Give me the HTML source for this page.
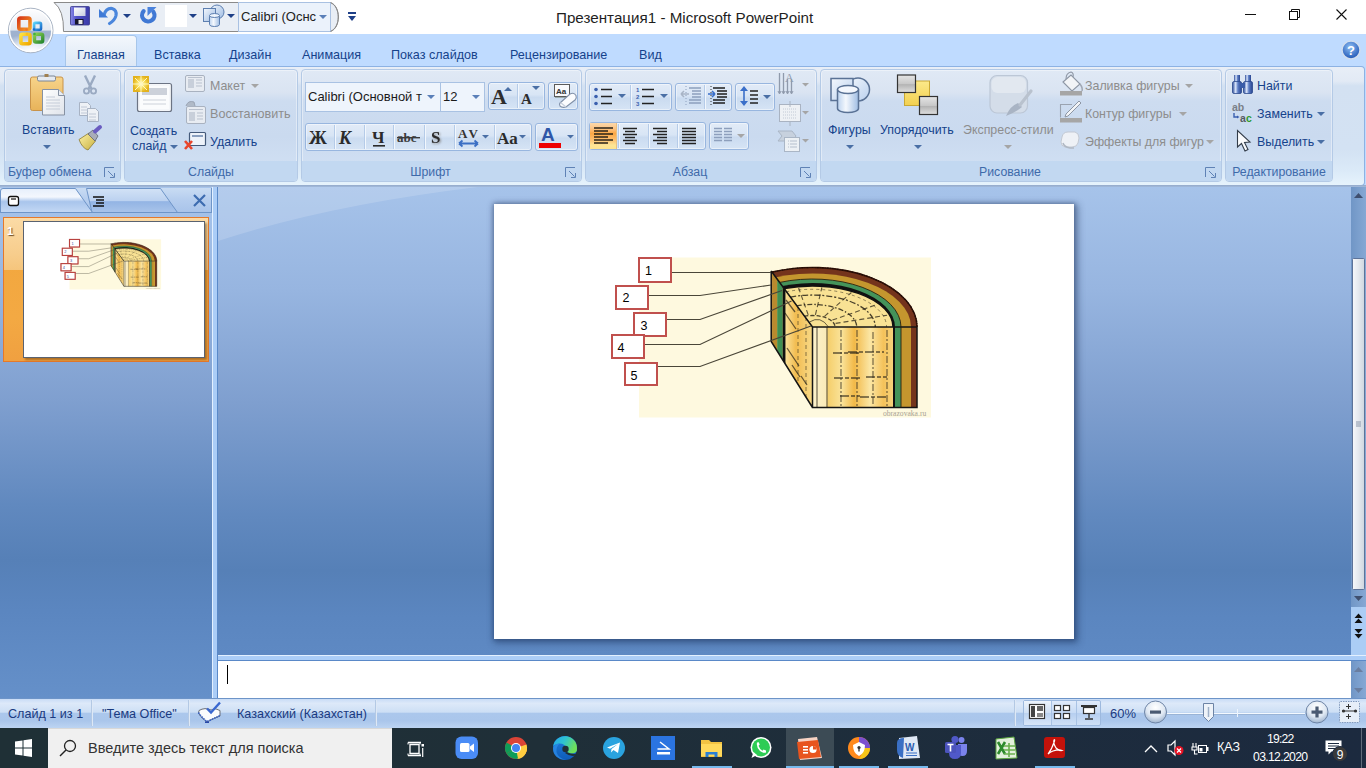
<!DOCTYPE html>
<html><head><meta charset="utf-8">
<style>
*{margin:0;padding:0;box-sizing:border-box}
html,body{width:1366px;height:768px;overflow:hidden;background:#fff;font-family:"Liberation Sans",sans-serif}
.a{position:absolute}
svg.a{overflow:visible}
.t{position:absolute;white-space:nowrap;line-height:1}
.grp{position:absolute;top:69px;height:113px;border:1px solid #b4cae6;border-radius:4px;background:linear-gradient(#e0e9f5 0,#dae4f2 20%,#cddcf0 28%,#cadaef 60%,#d3e2f5 100%);box-shadow:inset 0 0 0 1px rgba(255,255,255,.4)}
.glab{position:absolute;left:0;right:0;bottom:0;height:20px;background:#c2d8f1;border-radius:0 0 3px 3px;color:#3e6aaa;font-size:12.3px;text-align:center;line-height:23px}
.rb{font-size:12.5px;color:#15428b}
.gr{font-size:12.5px;color:#8d8d8d}
.bb{position:absolute;border:1px solid #98b6df;border-radius:3px;background:linear-gradient(#e2ebf7,#d8e5f5 45%,#cadbf0 55%,#d6e4f5);box-shadow:inset 0 0 0 1px rgba(255,255,255,.45)}
.sp{position:absolute;top:1px;bottom:1px;width:2px;background:linear-gradient(90deg,#b5cbe8 50%,#f2f7fd 50%)}
.dd{position:absolute;width:0;height:0;border-left:4px solid transparent;border-right:4px solid transparent;border-top:4px solid #4a6fa5}
.ddg{position:absolute;width:0;height:0;border-left:4px solid transparent;border-right:4px solid transparent;border-top:4px solid #a5a5a5}
</style></head><body>
<!-- TITLE -->
<div class="t" style="left:556px;top:10px;font-size:15.2px;color:#1f1f1f">Презентация1 - Microsoft PowerPoint</div>
<div class="a" style="left:1245px;top:14px;width:11px;height:1px;background:#111"></div>
<svg class="a" style="left:1289px;top:9px" width="12" height="12"><rect x="0.5" y="2.5" width="8" height="8" fill="none" stroke="#111"/><path d="M2.5 2.5V0.5H10.5V8.5H8.5" fill="none" stroke="#111"/></svg>
<svg class="a" style="left:1336px;top:9px" width="12" height="12"><path d="M0.5 0.5L10.5 10.5M10.5 0.5L0.5 10.5" stroke="#111" stroke-width="1.1"/></svg>
<!-- QAT -->
<svg class="a" style="left:0;top:0" width="370" height="34">
 <path d="M54 2.5 H330 C341 6 341 28 330 31.5 H63.5 Q64 10 54 2.5Z" fill="#e9eef5" stroke="#8a8a8a"/>
 <rect x="238.5" y="2.5" width="92" height="29" fill="#ebf2fb" stroke="#a9c1e2"/>
 <path d="M330.5 2.5 C341 6 341 28 330.5 31.5" fill="none" stroke="#8a8a8a"/>
 <!-- save -->
 <defs><linearGradient id="svg1" x1="0" y1="0" x2="1" y2="0"><stop offset="0" stop-color="#8a8ae8"/><stop offset=".3" stop-color="#5252c8"/><stop offset="1" stop-color="#3a3aa8"/></linearGradient>
 <linearGradient id="svg2" x1="0" y1="0" x2="1" y2="1"><stop offset="0" stop-color="#ffffff"/><stop offset="1" stop-color="#c8cce0"/></linearGradient></defs>
 <rect x="70.5" y="6.5" width="19" height="18.5" rx="1" fill="url(#svg1)" stroke="#3a3a8a" stroke-width="0.8"/>
 <rect x="74" y="7.5" width="11.5" height="8.5" fill="url(#svg2)"/>
 <rect x="75" y="19" width="8.5" height="5.5" fill="#15152a"/>
 <rect x="78.5" y="20" width="4" height="4" fill="#e8e8e8"/>
 <!-- undo -->
 <path d="M104 15 Q106 8 112 8.5 Q117 10 116 15.5 Q115 20 109.5 23.5" fill="none" stroke="#4a86dc" stroke-width="3.2" stroke-linecap="round"/>
 <path d="M99 9 L99 17.5 L108 17.5 Z" fill="#3f7ad6"/>
 <path d="M123 14h8l-4 4z" fill="#1e3f87"/>
 <!-- redo -->
 <path d="M143.6 11.2 A6.2 6.2 0 1 0 153.5 12" fill="none" stroke="#3f78d4" stroke-width="4.2" stroke-linecap="round"/>
 <path d="M147.5 7 L156.5 7 L147.5 16 Z" fill="#4a82dc"/>
 <rect x="165" y="5" width="22" height="22" fill="#fff"/>
 <path d="M189 14h8l-4 4z" fill="#1e3f87"/>
 <!-- shapes -->
 <defs><linearGradient id="qs" x1="0" y1="0" x2="1" y2="1"><stop offset="0" stop-color="#f4f8fd"/><stop offset="1" stop-color="#9dbbe2"/></linearGradient></defs>
 <circle cx="217" cy="12" r="7" fill="url(#qs)" stroke="#5d7fb0"/>
 <rect x="203.5" y="8.5" width="12" height="13" fill="url(#qs)" stroke="#5d7fb0"/>
 <path d="M209.5 15.5 v9 a5 2 0 0 0 10 0 v-9" fill="url(#cylq)" stroke="#5d7fb0"/>
 <ellipse cx="214.5" cy="15.5" rx="5" ry="2" fill="#eef5fd" stroke="#5d7fb0"/>
 <defs><linearGradient id="cylq" x1="0" y1="0" x2="1" y2="0"><stop offset="0" stop-color="#bcd3ef"/><stop offset=".4" stop-color="#f4f8fd"/><stop offset="1" stop-color="#9fbde3"/></linearGradient></defs>
 <path d="M227 14h8l-4 4z" fill="#1e3f87"/>
 <path d="M319 15h8l-4 4z" fill="#5a7fb8"/>
 <!-- customize -->
 <rect x="348" y="12" width="8" height="2" fill="#1e3f87"/>
 <path d="M348 16h8l-4 5z" fill="#1e3f87"/>
</svg>
<div class="t" style="left:241px;top:10px;font-size:13px;color:#222">Calibri (Оснс</div>
<!-- TABS -->
<div class="a" style="left:0;top:34px;width:1366px;height:33px;background:#bfdbff"></div>
<div class="a" style="left:65px;top:35px;width:72px;height:33px;border:1px solid #a7c6ea;border-bottom:none;border-radius:4px 4px 0 0;background:linear-gradient(#f3f7fc,#e4edf8 60%,#dce7f5)"></div>
<div class="t rb" style="left:77px;top:49px;font-size:12.6px">Главная</div>
<div class="t rb" style="left:154px;top:49px;font-size:12.6px">Вставка</div>
<div class="t rb" style="left:229px;top:49px;font-size:12.6px">Дизайн</div>
<div class="t rb" style="left:302px;top:49px;font-size:12.6px">Анимация</div>
<div class="t rb" style="left:391px;top:49px;font-size:12.6px">Показ слайдов</div>
<div class="t rb" style="left:510px;top:49px;font-size:12.6px">Рецензирование</div>
<div class="t rb" style="left:639px;top:49px;font-size:12.6px">Вид</div>
<svg class="a" style="left:1341px;top:40px" width="20" height="20">
 <defs><radialGradient id="hg" cx="45%" cy="35%" r="65%"><stop offset="0" stop-color="#8fc0f5"/><stop offset="1" stop-color="#1f55b5"/></radialGradient></defs>
 <circle cx="10" cy="10" r="9" fill="url(#hg)" stroke="#d0ddee" stroke-width="1.5"/>
 <text x="10" y="15" font-family="Liberation Sans" font-weight="bold" font-size="13" fill="#fff" text-anchor="middle">?</text>
</svg>
<!-- RIBBON BODY -->
<div class="a" style="left:0;top:66px;width:1366px;height:121px;background:#bfdbff"></div>
<div class="a" style="left:0;top:66px;width:1365px;height:120px;border:1px solid #8db2e3;border-left:none;border-radius:0 4px 4px 0;background:linear-gradient(#e8eef7 0,#e2eaf5 12%,#d3e1f2 16%,#d3e2f3 70%,#dbeaf8 88%,#e6f3fc 100%)"></div>
<div class="a" style="left:0;top:185px;width:1366px;height:2px;background:linear-gradient(#93a9ca,#a3bbdc)"></div>
<!-- groups -->
<div class="grp" style="left:4px;width:117px"><div class="glab" style="text-align:left;padding-left:3px">Буфер обмена</div></div>
<div class="grp" style="left:124px;width:174px"><div class="glab">Слайды</div></div>
<div class="grp" style="left:301px;width:281px"><div class="glab" style="padding-right:22px">Шрифт</div></div>
<div class="grp" style="left:585px;width:232px"><div class="glab" style="padding-right:22px">Абзац</div></div>
<div class="grp" style="left:820px;width:402px"><div class="glab" style="padding-right:22px">Рисование</div></div>
<div class="grp" style="left:1225px;width:108px"><div class="glab">Редактирование</div></div>
<!-- launchers -->
<svg class="a" style="left:0;top:0" width="1366" height="190">
 <g fill="none" stroke="#5f82b5">
  <path d="M104.5 177V167.5H114"/><path d="M108 171L113.5 176.5"/><path d="M110 177.5h4.5v-4.5"/>
  <path d="M565.5 177V167.5H575"/><path d="M569 171L574.5 176.5"/><path d="M571 177.5h4.5v-4.5"/>
  <path d="M800.5 177V167.5H810"/><path d="M804 171L809.5 176.5"/><path d="M806 177.5h4.5v-4.5"/>
  <path d="M1205.5 177V167.5H1215"/><path d="M1209 171L1214.5 176.5"/><path d="M1211 177.5h4.5v-4.5"/>
 </g>
</svg>
<!-- CLIPBOARD + SLIDES -->
<svg class="a" style="left:0;top:0" width="320" height="190">
 <defs>
  <linearGradient id="clipg" x1="0" y1="0" x2="0" y2="1"><stop offset="0" stop-color="#f7d48a"/><stop offset="1" stop-color="#e8b35a"/></linearGradient>
  <linearGradient id="paperg" x1="0" y1="0" x2="1" y2="1"><stop offset="0" stop-color="#ffffff"/><stop offset="1" stop-color="#dfe3ea"/></linearGradient>
  <radialGradient id="starg" cx="50%" cy="50%" r="50%"><stop offset="0" stop-color="#fffbe0"/><stop offset=".5" stop-color="#f8e060"/><stop offset="1" stop-color="#e3b21c"/></radialGradient>
 </defs>
 <!-- paste -->
 <rect x="30.5" y="77" width="32.5" height="33.5" rx="2" fill="url(#clipg)" stroke="#c8934a"/>
 <rect x="37.5" y="76" width="18" height="5" rx="1.5" fill="#e6eaf0" stroke="#7b8696"/>
 <rect x="44.5" y="74" width="4" height="3" fill="#a08050"/>
 <path d="M42.5 89.5h16l6 6v19.5h-22z" fill="url(#paperg)" stroke="#8792a3"/>
 <path d="M58.5 89.5v6h6" fill="#e9edf3" stroke="#8792a3"/>
 <path d="M46 97h9M46 100h14M46 103h14M46 106h14M46 109h14" stroke="#c5ccd8"/>
 <!-- cut (gray) -->
 <path d="M85 75.5 L91.5 89 M95 75.5 L88.5 89" stroke="#9aaac2" stroke-width="2.4"/>
 <circle cx="86.5" cy="91" r="2.6" fill="none" stroke="#9aaac2" stroke-width="1.8"/>
 <circle cx="93.5" cy="91" r="2.6" fill="none" stroke="#9aaac2" stroke-width="1.8"/>
 <!-- copy -->
 <path d="M79.5 102.5h8l3 3v10h-11z" fill="#eef1f6" stroke="#a8b3c4"/>
 <path d="M87.5 108.5h8l3 3v10h-11z" fill="#eef1f6" stroke="#a8b3c4"/>
 <path d="M81 107h6M81 110h7M81 113h7M89 114h7M89 117h7M89 120h7" stroke="#c0c8d6"/>
 <!-- format painter -->
 <defs><linearGradient id="brg" x1="0" y1="0" x2="1" y2="1"><stop offset="0" stop-color="#fdf3a8"/><stop offset="1" stop-color="#c9b040"/></linearGradient></defs>
 <path d="M79 139.5 L89 133 L95.5 141 L88 150 Q82 148 79 139.5Z" fill="url(#brg)" stroke="#8c7a30" stroke-width=".8"/>
 <path d="M88 134 L93 130 L98 136 L95 141Z" fill="#a8acb8" stroke="#5e6270" stroke-width=".8"/>
 <path d="M95 131.5 L100 127" stroke="#6a5cc0" stroke-width="4" stroke-linecap="round"/>
 <!-- new slide -->
 <rect x="137.5" y="83.5" width="34" height="28" rx="2" fill="#f4f6f9" stroke="#6c7484" stroke-width="1.2"/>
 <rect x="140" y="86" width="29" height="23" fill="#fbfcfd"/>
 <rect x="142" y="88" width="25" height="7" fill="#ccd1da"/>
 <path d="M143 100h23M143 104h23" stroke="#cdd2da"/>
 <rect x="133" y="76" width="16" height="16" fill="url(#starg)"/>
 <path d="M141 76v16M133 84h16M135 78l12 12M147 78l-12 12" stroke="#fff7c0" stroke-width="1"/>
 <!-- layout icon -->
 <rect x="185.5" y="75.5" width="19" height="16" rx="1.5" fill="#e8ecf2" stroke="#a9b2c0"/>
 <rect x="188" y="79" width="6" height="9" fill="#c8cfda"/>
 <path d="M196 80h6M196 83h6M196 86h6M188 77.5h14" stroke="#b9c1ce"/>
 <!-- reset icon -->
 <rect x="186.5" y="106.5" width="19" height="17" rx="1.5" fill="#e8ecf2" stroke="#a9b2c0"/>
 <rect x="189" y="112" width="6" height="9" fill="#c8cfda"/>
 <path d="M197 113h6M197 116h6M197 119h6M189 109.5h14" stroke="#b9c1ce"/>
 <path d="M186 106 Q188 100 194 102 L195 106" fill="#b0bac8" stroke="#9aa4b4"/>
 <!-- delete icon -->
 <rect x="189.5" y="132.5" width="16" height="13" rx="1" fill="#eef3fa" stroke="#445a7a" stroke-width="1.2"/>
 <rect x="192" y="135" width="11" height="2" fill="#8aa0c0"/>
 <path d="M185 141 L192 149 M192 141 L185 149" stroke="#e8452c" stroke-width="2.6"/>
</svg>
<div class="t rb" style="left:22px;top:124px;font-size:12.4px">Вставить</div>
<div class="dd" style="left:43px;top:145px"></div>
<div class="t rb" style="left:130px;top:125px;font-size:12.4px">Создать</div>
<div class="t rb" style="left:132px;top:140px;font-size:12.4px">слайд</div>
<div class="dd" style="left:170px;top:145px"></div>
<div class="t gr" style="left:210px;top:80px;font-size:12.4px">Макет</div>
<div class="ddg" style="left:251px;top:84px"></div>
<div class="t gr" style="left:210px;top:108px;font-size:12.6px">Восстановить</div>
<div class="t rb" style="left:210px;top:136px;font-size:12.4px">Удалить</div>
<!-- FONT GROUP -->
<div class="a" style="left:305px;top:82px;width:136px;height:30px;border:1px solid #a9c2e3;background:#eef4fc"></div>
<div class="a" style="left:440px;top:82px;width:45px;height:30px;border:1px solid #a9c2e3;background:#eef4fc"></div>
<div class="t" style="left:308px;top:90px;font-size:13px;color:#1a1a1a">Calibri (Основной т</div>
<div class="dd" style="left:427px;top:95px;border-top-color:#5a7fb8"></div>
<div class="t" style="left:443px;top:90px;font-size:13px;color:#1a1a1a">12</div>
<div class="dd" style="left:472px;top:95px;border-top-color:#5a7fb8"></div>
<div class="bb" style="left:488px;top:82px;width:57px;height:28px"><div class="sp" style="left:28px"></div></div>
<div class="bb" style="left:548px;top:82px;width:30px;height:28px"></div>
<div class="bb" style="left:305px;top:123px;width:227px;height:28px">
 <div class="sp" style="left:28px"></div><div class="sp" style="left:58px"></div><div class="sp" style="left:87px"></div><div class="sp" style="left:118px"></div><div class="sp" style="left:148px"></div><div class="sp" style="left:188px"></div>
</div>
<div class="bb" style="left:535px;top:123px;width:43px;height:28px"></div>
<svg class="a" style="left:0;top:0" width="600" height="190">
 <text x="491" y="104" font-family="Liberation Serif" font-weight="bold" font-size="22" fill="#2d2d2d">A</text>
 <path d="M504 91h8l-4-4z" fill="#4a6fa5"/>
 <text x="521" y="104" font-family="Liberation Serif" font-weight="bold" font-size="15" fill="#2d2d2d">A</text>
 <path d="M532 86h8l-4 4z" fill="#4a6fa5"/>
 <!-- clear formatting -->
 <rect x="554.5" y="84.5" width="15" height="12" fill="#f8f9fb" stroke="#5a5a5a"/>
 <path d="M555 97.5h14" stroke="#9aa" />
 <text x="556" y="94" font-family="Liberation Sans" font-weight="bold" font-size="8" fill="#333">Aa</text>
 <path d="M560 103 L570 94 Q574 92 576 95.5 Q577 98 575 100 L566 107 Q562 108 560 106 Q559 104 560 103Z" fill="#fbfcfe" stroke="#8090a8" stroke-width="1.1"/>
 <path d="M566 107 L560.5 102.5" stroke="#c6cfdc" stroke-width="1.2"/>
 <!-- B I U S ... -->
 <text x="309" y="144" font-family="Liberation Serif" font-weight="bold" font-size="18" fill="#2b2b2b">Ж</text>
 <text x="339" y="144" font-family="Liberation Serif" font-weight="bold" font-style="italic" font-size="18" fill="#2b2b2b">К</text>
 <text x="372" y="143" font-family="Liberation Serif" font-weight="bold" font-size="17" fill="#2b2b2b">Ч</text>
 <rect x="373" y="145" width="12" height="1.6" fill="#2b2b2b"/>
 <text x="397" y="142" font-family="Liberation Serif" font-weight="bold" font-size="13" fill="#3b3b3b">abc</text>
 <rect x="397" y="137" width="23" height="1.4" fill="#3b3b3b"/>
 <text x="431" y="143" font-family="Liberation Serif" font-weight="bold" font-size="17" fill="#2b2b2b" style="filter:drop-shadow(1px 1px 1px #888)">S</text>
 <text x="458" y="138" font-family="Liberation Serif" font-weight="bold" font-size="13" fill="#333" textLength="20">AV</text>
 <path d="M459 143.5h19M459 143.5l3.5-3M459 143.5l3.5 3M478 143.5l-3.5-3M478 143.5l-3.5 3" stroke="#3b6fc4" stroke-width="1.8" fill="none"/>
 <path d="M482 135h7l-3.5 3.5z" fill="#4a6fa5"/>
 <text x="497" y="144" font-family="Liberation Serif" font-weight="bold" font-size="17" fill="#2b2b2b">Aa</text>
 <path d="M519 135h7l-3.5 3.5z" fill="#4a6fa5"/>
 <text x="541" y="141" font-family="Liberation Sans" font-weight="bold" font-size="19" fill="#2f56a8">A</text>
 <rect x="539" y="143" width="22" height="5" fill="#ee0000"/>
 <path d="M567 135h7l-3.5 3.5z" fill="#4a6fa5"/>
</svg>
<!-- PARAGRAPH GROUP -->
<div class="bb" style="left:589px;top:83px;width:83px;height:28px"><div class="sp" style="left:40px"></div></div>
<div class="bb" style="left:675px;top:83px;width:57px;height:28px"><div class="sp" style="left:28px"></div></div>
<div class="bb" style="left:735px;top:83px;width:40px;height:28px"></div>
<div class="bb" style="left:589px;top:122px;width:117px;height:28px"><div class="sp" style="left:28px"></div><div class="sp" style="left:58px"></div><div class="sp" style="left:87px"></div></div>
<div class="a" style="left:590px;top:123px;width:27px;height:26px;background:linear-gradient(#fbd8aa 0,#fcc588 20%,#fba845 40%,#fcc070 65%,#fde595 85%,#fde38f 100%);border-right:1px solid #e8c080"></div>
<div class="bb" style="left:709px;top:122px;width:40px;height:28px"></div>
<svg class="a" style="left:0;top:0" width="830" height="190">
 <g fill="#3a5fae"><circle cx="596" cy="89.5" r="1.8"/><circle cx="596" cy="96.5" r="1.8"/><circle cx="596" cy="103.5" r="1.8"/></g>
 <path d="M601 89.5h11M601 96.5h11M601 103.5h11" stroke="#222" stroke-width="1.6"/>
 <path d="M618 94h8l-4 4z" fill="#4a6fa5"/>
 <text x="636" y="92" font-family="Liberation Sans" font-weight="bold" font-size="6" fill="#3a5fae">1</text>
 <text x="636" y="99" font-family="Liberation Sans" font-weight="bold" font-size="6" fill="#3a5fae">2</text>
 <text x="636" y="106" font-family="Liberation Sans" font-weight="bold" font-size="6" fill="#3a5fae">3</text>
 <path d="M642 89.5h12M642 96.5h12M642 103.5h12" stroke="#222" stroke-width="1.6"/>
 <path d="M660 94h8l-4 4z" fill="#4a6fa5"/>
 <!-- decrease indent (gray) -->
 <path d="M689 88h12M692 91h9M692 94h9M692 97h9M689 100h12M689 103h12" stroke="#8da0bd" stroke-width="1.5"/>
 <path d="M681 94h8M681 94l3-3M681 94l3 3" stroke="#a8b4c6" stroke-width="1.5"/>
 <path d="M686 86v20" stroke="#8da0bd" stroke-dasharray="1 2"/>
 <!-- increase indent -->
 <path d="M713 88h12M717 91h10M717 94h10M717 97h10M713 100h12M713 103h12" stroke="#1e1e1e" stroke-width="1.5"/>
 <path d="M708 94h7M715 94l-3-3M715 94l-3 3" stroke="#3a6fc9" stroke-width="1.6"/>
 <path d="M711 86v20" stroke="#333" stroke-dasharray="1 2"/>
 <!-- line spacing -->
 <path d="M744 90v12" stroke="#3a6fc9" stroke-width="1.6"/>
 <path d="M740 91l4-5 4 5zM740 101l4 5 4-5z" fill="#3a6fc9"/>
 <path d="M750 91h8M750 95h8M750 99h8M750 103h8" stroke="#222" stroke-width="1.6"/>
 <path d="M763 95h8l-4 4z" fill="#4a6fa5"/>
 <!-- text direction etc gray -->
 <path d="M779.5 73v20M783.5 73v20M787.5 79v14M791.5 79v14" stroke="#8f9aac" stroke-width="1.3"/>
 <path d="M778 91l1.5 3 1.5-3M782 91l1.5 3 1.5-3M786 91l1.5 3 1.5-3M790 91l1.5 3 1.5-3" fill="none" stroke="#8f9aac"/>
 <text x="785" y="82" font-family="Liberation Serif" font-size="12" fill="#8f9aac">A</text>
 <path d="M802 83h7l-3.5 3.5z" fill="#a5a5a5"/>
 <rect x="779.5" y="104.5" width="21" height="17" fill="#eef1f5" stroke="#a9b3c2"/>
 <path d="M783 109h14M783 112h14M783 115h14M783 118h14" stroke="#c2cad6" stroke-dasharray="1 1"/>
 <path d="M790 101v6M790 121v5" stroke="#a9b3c2"/>
 <path d="M802 111h7l-3.5 3.5z" fill="#a5a5a5"/>
 <path d="M778 131h14l4 5-4 5h-14l4-5z" fill="#c7d1de" stroke="#aab6c6"/>
 <rect x="784.5" y="137.5" width="15" height="14" fill="#edf1f5" stroke="#aab6c6"/>
 <path d="M788 141h9M788 144h9M788 147h9" stroke="#b5bfcd" stroke-dasharray="1 1 6 0"/>
 <path d="M802 139h7l-3.5 3.5z" fill="#a5a5a5"/>
 <!-- alignment -->
 <path d="M594 128h19M594 131h14M594 134h19M594 137h14M594 140h19M594 143h14" stroke="#2a2418" stroke-width="1.6"/>
 <path d="M623 128.5h14M625 131.5h10M623 134.5h14M625 137.5h10M623 140.5h14M625 143.5h10" stroke="#222" stroke-width="1.5"/>
 <path d="M653 128.5h14M657 131.5h10M653 134.5h14M657 137.5h10M653 140.5h14M657 143.5h10" stroke="#222" stroke-width="1.5"/>
 <path d="M682 128.5h14M682 131.5h14M682 134.5h14M682 137.5h14M682 140.5h14M682 143.5h14" stroke="#222" stroke-width="1.5"/>
 <!-- columns -->
 <path d="M714 128.5h8M724 128.5h8M714 131.5h8M724 131.5h8M714 134.5h8M724 134.5h8M714 137.5h8M724 137.5h8M714 140.5h8M724 140.5h8" stroke="#8d9fbc" stroke-width="1.5"/>
 <path d="M737 134h8l-4 4z" fill="#a5a5a5"/>
</svg>
<!-- DRAWING + EDITING -->
<svg class="a" style="left:0;top:0" width="1366" height="190">
 <defs>
  <linearGradient id="cyl" x1="0" y1="0" x2="1" y2="0"><stop offset="0" stop-color="#bcd3ef"/><stop offset=".4" stop-color="#f4f8fd"/><stop offset="1" stop-color="#9fbde3"/></linearGradient>
  <linearGradient id="sq1" x1="0" y1="0" x2="0" y2="1"><stop offset="0" stop-color="#f0f0f0"/><stop offset="1" stop-color="#b8b8b8"/></linearGradient>
  <linearGradient id="sqy" x1="0" y1="0" x2="0" y2="1"><stop offset="0" stop-color="#fdf1a0"/><stop offset="1" stop-color="#f1cf3c"/></linearGradient>
 </defs>
 <!-- shapes -->
 <defs><linearGradient id="shp" x1="0" y1="0" x2="1" y2="1"><stop offset="0" stop-color="#f4f8fd"/><stop offset="1" stop-color="#b9d0ee"/></linearGradient></defs>
 <circle cx="858" cy="89.5" r="11.5" fill="url(#shp)" stroke="#5a7295" stroke-width="1.5"/>
 <rect x="831" y="78.5" width="22" height="22" fill="url(#shp)" stroke="#5a7295" stroke-width="1.5"/>
 <path d="M837.5 89.5 v19 a10.5 4 0 0 0 21 0 v-19" fill="url(#cyl)" stroke="#5a7295" stroke-width="1.5"/>
 <ellipse cx="848" cy="89.5" rx="10.5" ry="4" fill="#f3f7fd" stroke="#5a7295" stroke-width="1.5"/>
 <!-- arrange -->
 <defs><linearGradient id="sqg" x1="0" y1="0" x2="0" y2="1"><stop offset="0" stop-color="#e6e6e6"/><stop offset=".5" stop-color="#c8c8c8"/><stop offset=".55" stop-color="#b4b4b4"/><stop offset="1" stop-color="#e0e0e0"/></linearGradient>
 <linearGradient id="sqy2" x1="0" y1="0" x2="0" y2="1"><stop offset="0" stop-color="#fce98a"/><stop offset="1" stop-color="#f2d050"/></linearGradient></defs>
 <rect x="904.5" y="81" width="25" height="24.5" fill="url(#sqy2)" stroke="#c9a834"/>
 <rect x="897.5" y="75" width="18" height="17.5" fill="url(#sqg)" stroke="#333" stroke-width="1.2"/>
 <rect x="919.5" y="96.5" width="18" height="18" fill="url(#sqg)" stroke="#333" stroke-width="1.2"/>
 <!-- quick styles gray -->
 <rect x="990" y="75.5" width="37.5" height="37.5" rx="7" fill="#d4dde9" stroke="#bcc7d6" stroke-width="1.2"/>
 <rect x="991.5" y="77" width="34.5" height="16" rx="6" fill="#e2e8f0"/>
 <path d="M1006 116 Q1010 106 1018 103 L1022 107 Q1016 112 1006 116Z" fill="#a9b4c4"/>
 <path d="M1020 105 L1031 91" stroke="#b9c2ce" stroke-width="3.2" stroke-linecap="round"/>
 <!-- fill icon -->
 <path d="M1063 82 L1071 75 L1080 84 L1072 91 Z" fill="#f2f4f7" stroke="#8d96a4" stroke-width="1.1"/>
 <path d="M1066 79 Q1066 73 1071 72 Q1074 73 1073 77" fill="none" stroke="#8d96a4" stroke-width="1.1"/>
 <path d="M1080 84 Q1083 88 1082 91" fill="none" stroke="#a0a8b4" stroke-width="1.5"/>
 <rect x="1060" y="91" width="22" height="4.5" fill="#a6a6a6"/>
 <!-- outline icon -->
 <path d="M1060.5 117.5 V104.5 H1072" fill="none" stroke="#9aa3b0" stroke-width="1.1"/>
 <path d="M1066 114 L1079 101 L1081 103 L1068 116 L1065 117Z" fill="#f2f4f7" stroke="#8d96a4"/>
 <rect x="1060" y="118" width="22" height="4.5" fill="#a6a6a6"/>
 <!-- effects icon -->
 <path d="M1062 137 Q1063 132 1068 132 L1075 132 Q1079 133 1079 138 L1078 143 Q1077 147 1072 147 L1065 147 Q1061 146 1061 142Z" fill="#eef1f6" stroke="#c3c9d3"/>
 <path d="M1063 143 Q1064 147 1070 148 L1074 148" fill="none" stroke="#b0b8c4" stroke-width="1.5"/>
 <!-- find -->
 <defs><linearGradient id="bino" x1="0" y1="0" x2="1" y2="0"><stop offset="0" stop-color="#2d4d9a"/><stop offset=".35" stop-color="#dbe6fb"/><stop offset=".6" stop-color="#5b7cc4"/><stop offset="1" stop-color="#2a4690"/></linearGradient></defs>
 <rect x="1234" y="75" width="6" height="7" fill="url(#bino)"/><rect x="1245" y="75" width="6" height="7" fill="url(#bino)"/>
 <rect x="1232.5" y="81.5" width="9" height="12" rx="1.5" fill="url(#bino)" stroke="#2c4a8e" stroke-width=".8"/>
 <rect x="1243.5" y="81.5" width="9" height="12" rx="1.5" fill="url(#bino)" stroke="#2c4a8e" stroke-width=".8"/>
 <rect x="1240" y="83" width="5" height="5" fill="#3a5ca8"/>
 <!-- replace -->
 <text x="1232" y="111" font-family="Liberation Sans" font-weight="bold" font-size="10.5" fill="#7a7f88">ab</text>
 <text x="1240" y="122" font-family="Liberation Sans" font-weight="bold" font-size="10.5" fill="#555a62">a</text>
 <text x="1246" y="122" font-family="Liberation Sans" font-weight="bold" font-size="10.5" fill="#2f9a2f">c</text>
 <path d="M1234 113 v4 h4" fill="none" stroke="#3a5fae" stroke-width="1.4"/><path d="M1237 115.5 l2.5 1.5 -2.5 1.5z" fill="#3a5fae"/>
 <!-- select -->
 <path d="M1237.5 130.5 L1237.5 147 L1241.5 143.5 L1245 151 L1248 149.5 L1244.5 142.5 L1250 142 Z" fill="#fafbfd" stroke="#333d4a" stroke-width="1.1"/>
</svg>
<div class="t rb" style="left:828px;top:124px;font-size:12.4px">Фигуры</div>
<div class="dd" style="left:846px;top:145px"></div>
<div class="t rb" style="left:880px;top:124px;font-size:12.4px">Упорядочить</div>
<div class="dd" style="left:914px;top:145px"></div>
<div class="t gr" style="left:963px;top:124px;font-size:12.4px">Экспресс-стили</div>
<div class="ddg" style="left:1004px;top:145px"></div>
<div class="t gr" style="left:1085px;top:80px;font-size:12.4px">Заливка фигуры</div>
<div class="ddg" style="left:1185px;top:84px"></div>
<div class="t gr" style="left:1085px;top:108px;font-size:12.4px">Контур фигуры</div>
<div class="ddg" style="left:1179px;top:112px"></div>
<div class="t gr" style="left:1085px;top:136px;font-size:12.4px">Эффекты для фигур</div>
<div class="ddg" style="left:1206px;top:140px"></div>
<div class="t rb" style="left:1257px;top:80px;font-size:12.4px">Найти</div>
<div class="t rb" style="left:1257px;top:108px;font-size:12.4px">Заменить</div>
<div class="dd" style="left:1317px;top:112px"></div>
<div class="t rb" style="left:1257px;top:136px;font-size:12.4px">Выделить</div>
<div class="dd" style="left:1317px;top:140px"></div>
<!-- MAIN AREA -->
<div class="a" style="left:0;top:187px;width:1366px;height:511px;background:#a5c3ea"></div>
<!-- left pane -->
<div class="a" style="left:0;top:187px;width:212px;height:511px;background:linear-gradient(#a8c5eb 0,#97b5e0 20%,#7f9fcf 42%,#6189bf 62%,#5680b7 73%,#5b86c0 83%,#6590c9 100%)"></div>
<!-- pane tabs strip -->
<div class="a" style="left:0;top:188px;width:212px;height:25px;background:linear-gradient(#c9dcf3,#b5cdee 50%,#a9c4ea);border-bottom:1px solid #6e95c8;border-right:1px solid #6e95c8"></div>
<svg class="a" style="left:0;top:187px" width="212" height="27">
 <defs>
  <linearGradient id="pt1" x1="0" y1="0" x2="0" y2="1"><stop offset="0" stop-color="#e6effb"/><stop offset=".35" stop-color="#f3f7fd"/><stop offset=".55" stop-color="#a9c5ec"/><stop offset="1" stop-color="#c3d8f4"/></linearGradient>
  <linearGradient id="pt2" x1="0" y1="0" x2="0" y2="1"><stop offset="0" stop-color="#d2e2f6"/><stop offset=".5" stop-color="#bcd2f0"/><stop offset=".55" stop-color="#93b4e4"/><stop offset="1" stop-color="#a9c4ea"/></linearGradient>
 </defs>
 <path d="M86.5 1.5 H160.5 L177.5 25.5 H92 Z" fill="url(#pt2)" stroke="#6e95c8"/>
 <path d="M0.5 25.5 V4 Q0.5 1.5 3 1.5 H75.5 L92.5 25.5 Z" fill="url(#pt1)" stroke="#6e95c8"/>
 <rect x="8.5" y="9.5" width="10" height="9" rx="2" fill="#fff" stroke="#111" stroke-width="1.3"/>
 <path d="M11 12h5" stroke="#111" stroke-width="1.2"/>
 <path d="M93 10h11M96 13h8M96 16h8M93 19h11" stroke="#111" stroke-width="1.3"/>
 <path d="M194 8 L205 19 M205 8 L194 19" stroke="#3d6cb0" stroke-width="2.2"/>
</svg>
<!-- thumbnail selection -->
<div class="a" style="left:3px;top:217px;width:206px;height:145px;border:1px solid #e5792a;background:linear-gradient(#fbdba6 0,#f7cd8c 70%,#f5c57c 100%) 0 0/100% 52px no-repeat,linear-gradient(#f2a63c,#f3a943 70%,#f0a040)"></div>
<div class="t" style="left:7px;top:226px;font-size:11.5px;font-weight:bold;color:#fff;text-shadow:1px 1px 1px rgba(60,30,0,.75)">1</div>
<div class="a" style="left:23px;top:221px;width:182px;height:137px;background:#fff;border:1px solid #5a6270;box-shadow:2px 2px 2px rgba(90,50,0,.45)"></div>
<!-- splitter -->
<div class="a" style="left:212px;top:187px;width:6px;height:511px;background:#abcdf7;border-left:1px solid #e3f0ff;border-right:1px solid #5a89c8"></div>
<!-- slide area -->
<div class="a" style="left:218px;top:187px;width:1133px;height:468px;background:linear-gradient(#a6c3ea 0,#97b5e0 22%,#7f9fcf 46%,#6189bf 70%,#5680b7 82%,#5b86c0 92%,#5e89c3 100%)"></div>
<svg class="a" style="left:218px;top:187px" width="1133" height="200">
 <path d="M0 54 Q110 18 260 0 L0 0Z" fill="rgba(255,255,255,.16)"/>
</svg>
<!-- slide -->
<div class="a" style="left:494px;top:204px;width:580px;height:435px;background:#fff;box-shadow:0 0 4px 1px rgba(20,40,80,.3),2px 2px 7px 2px rgba(20,40,80,.42)"></div>
<!-- vertical scrollbar -->
<div class="a" style="left:1351px;top:187px;width:15px;height:420px;background:linear-gradient(90deg,#7096c6,#86a8d4)"></div>
<svg class="a" style="left:1351px;top:187px" width="15" height="470">
 <path d="M3 11h9l-4.5-5z" fill="#3f4f6f"/>
 <rect x="1.5" y="71.5" width="12" height="331" rx="1" fill="url(#thb)" stroke="#5d7399"/>
 <defs><linearGradient id="thb" x1="0" y1="0" x2="1" y2="0"><stop offset="0" stop-color="#f6f8fb"/><stop offset=".5" stop-color="#e4e8ee"/><stop offset="1" stop-color="#cfd6df"/></linearGradient></defs>
 <path d="M5 235h5M5 237h5M5 239h5" stroke="#8a97aa"/>
 <path d="M3 409h9l-4.5 5z" fill="#3f4f6f"/>
 <rect x="0" y="420" width="15" height="48" fill="#abcdf5"/>
 <path d="M3.5 431h8l-4-4.5zM3.5 436h8l-4-4.5z" fill="#111"/>
 <path d="M3.5 442h8l-4 4.5zM3.5 447h8l-4 4.5z" fill="#111"/>
</svg>
<!-- notes splitter -->
<div class="a" style="left:218px;top:655px;width:1148px;height:6px;background:#abcdf7;border-top:1px solid #e3f0ff;border-bottom:1px solid #5a89c8"></div>
<div class="a" style="left:218px;top:661px;width:1133px;height:37px;background:#fff"></div>
<div class="a" style="left:227px;top:665px;width:1px;height:19px;background:#000"></div>
<div class="a" style="left:1351px;top:661px;width:15px;height:37px;background:linear-gradient(90deg,#7096c6,#86a8d4)"></div>
<svg class="a" style="left:1351px;top:661px" width="15" height="37">
 <path d="M3 11h9l-4.5-5z" fill="#6a7ea0"/><path d="M3 27h9l-4.5 5z" fill="#6a7ea0"/>
</svg>
<svg class="a" style="left:0;top:0;pointer-events:none" width="1366" height="768">
<defs>
<linearGradient id="wood" x1="0" y1="0" x2="1" y2="0"><stop offset="0" stop-color="#fcf2cc"/><stop offset=".13" stop-color="#faeab8"/><stop offset=".15" stop-color="#f5cf6c"/><stop offset=".28" stop-color="#fae39a"/><stop offset=".4" stop-color="#f2b948"/><stop offset=".55" stop-color="#fbe6a4"/><stop offset=".68" stop-color="#f4c25a"/><stop offset=".85" stop-color="#fae29a"/><stop offset="1" stop-color="#f3c460"/></linearGradient>
<linearGradient id="lwood" x1="0" y1="0" x2="1" y2="0"><stop offset="0" stop-color="#f4c860"/><stop offset=".35" stop-color="#fae098"/><stop offset=".6" stop-color="#f2bc50"/><stop offset="1" stop-color="#f8da88"/></linearGradient>
<g id="slidec">
<rect x="639" y="257.5" width="292" height="160" fill="#fef9df"/>
<path d="M771.2 271L812.5 327.0L812.5 407.5L771.2 341.5Z" fill="url(#lwood)"/>
<path d="M771.2 271.0L772.4 272.6L772.4 343.4L771.2 341.5Z" fill="#6a3a1a"/>
<path d="M772.4 272.6L777.2 279.1L777.2 351.1L772.4 343.4Z" fill="#b98a2e"/>
<path d="M777.2 279.1L782.7 286.6L782.7 359.9L777.2 351.1Z" fill="#3f8f52"/>
<path d="M782.7 286.6L784.7 289.3L784.7 363.1L782.7 359.9Z" fill="#111"/>
<rect x="812.5" y="327.0" width="104.5" height="80.5" fill="url(#wood)"/>
<rect x="911.0" y="327.0" width="6.0" height="80.5" fill="#74341c"/>
<rect x="901.0" y="327.0" width="10.0" height="80.5" fill="#c4962e"/>
<rect x="895.0" y="327.0" width="6.0" height="80.5" fill="#44935a"/>
<rect x="893.0" y="327.0" width="2.0" height="80.5" fill="#111111"/>
<path d="M812.5 327.0L772.04 272.14A104.5 59.5 0 0 1 917.00 327.0Z" fill="#74341c"/>
<path d="M812.5 327.0L775.87 277.34A98.5 53.5 0 0 1 911.00 327.0Z" fill="#c4962e"/>
<path d="M812.5 327.0L779.63 282.43A88.5 48 0 0 1 901.00 327.0Z" fill="#44935a"/>
<path d="M812.5 327.0L782.30 286.05A82.5 44 0 0 1 895.00 327.0Z" fill="#111111"/>
<path d="M812.5 327.0L784.19 288.62A80.5 41 0 0 1 893.00 327.0Z" fill="#f9e294"/>
<path d="M804.57 316.25A22.540000000000003 11.48 0 0 1 835.04 327.0" fill="none" stroke="#2a2418" stroke-width="1.3" stroke-dasharray="4 2" opacity=".85"/>
<path d="M796.93 305.89A44.275000000000006 22.55 0 0 1 856.77 327.0" fill="none" stroke="#2a2418" stroke-width="1.3" stroke-dasharray="5 2 1.5 2" opacity=".85"/>
<path d="M790.42 297.06A62.79 31.98 0 0 1 875.29 327.0" fill="none" stroke="#2a2418" stroke-width="1.3" stroke-dasharray="6 2 2 2" opacity=".85"/>
<path d="M786.46 291.69A74.06 37.72 0 0 1 886.56 327.0" fill="none" stroke="#2a2418" stroke-width="1" stroke-dasharray="3 3" opacity=".5"/>
<path d="M808.2 314.9L798.6 287.9" stroke="#2a2418" stroke-width="1.1" stroke-dasharray="5 3" opacity=".75"/>
<path d="M815.4 314.8L821.9 287.5" stroke="#2a2418" stroke-width="1.1" stroke-dasharray="5 3" opacity=".75"/>
<path d="M824.5 316.3L851.4 292.5" stroke="#2a2418" stroke-width="1.1" stroke-dasharray="5 3" opacity=".75"/>
<path d="M832.4 320.1L876.9 304.5" stroke="#2a2418" stroke-width="1.1" stroke-dasharray="5 3" opacity=".75"/>
<path d="M835.6 323.4L887.1 315.2" stroke="#2a2418" stroke-width="1.1" stroke-dasharray="5 3" opacity=".75"/>
<clipPath id="lfc"><path d="M771.2 271L812.5 327.0L812.5 407.5L771.2 341.5Z"/></clipPath>
<g fill="none" stroke="#2a2418" clip-path="url(#lfc)">
<path d="M786 300l9 12M785 313l11 16M787 348l12 18M792 365l8 12M801 376l6 9" stroke-width="1.3" opacity=".7"/>
<path d="M798 300v95M806 310v90" stroke-width="1" stroke-dasharray="4 3" opacity=".55"/>
</g>
<g fill="none" stroke="#2a2418">
<path d="M827 327.0V407.5M817 327.0V407.5" stroke-width="1" opacity=".8"/>
<path d="M841 330v76M857 330v76M873 332v74M887 330v76" stroke-width="1.1" stroke-dasharray="7 2 2 2" opacity=".7"/>
<path d="M833 353h27M848 352h36M834 378h26M866 377h21M840 396h20M860 397h27" stroke-width="1.6" stroke-dasharray="9 2 4 2" opacity=".75"/>
</g>
<path d="M809.5 322.0 Q820.5 315.0 828.5 327.0" fill="none" stroke="#2a2418" stroke-width="1" opacity=".7"/>
<path d="M771.2 271L812.5 327.0H917.0M812.5 327.0V407.5H917.0V327.0M771.2 271V341.5L812.5 407.5" fill="none" stroke="#141414" stroke-width="1.5"/>
<path d="M772.04 272.14A104.5 59.5 0 0 1 917.00 327.0" fill="none" stroke="#3a140a" stroke-width="1.6"/>
<path d="M784.19 288.62A80.5 41 0 0 1 893.00 327.0" fill="none" stroke="#111" stroke-width="1.4"/>
<path d="M779.63 282.43A88.5 48 0 0 1 901.00 327.0" fill="none" stroke="#2a2010" stroke-width=".9"/>
<path d="M901.0 327.0V407.5" stroke="#2a2010" stroke-width=".9"/>
<path d="M772.04 272.14A104.5 59.5 0 0 1 917.00 327.0" fill="none" stroke="#1a0a04" stroke-width="1.2" stroke-dasharray="2 1 1 1"/>
<path d="M784.7 289.3V363.1" stroke="#111" stroke-width="1.5"/>
<g fill="none" stroke="#4a4638" stroke-width="1.15">
<path d="M672 272.5H771"/>
<path d="M649 295.5L700 295.5L771 285"/>
<path d="M667 319.5L700 319.5L782 290.5"/>
<path d="M645 344.5L700 344.5L791.5 301"/>
<path d="M657 366.5L700 366.5L811 326"/>
</g>
<rect x="639" y="258" width="32" height="24" fill="#fff" stroke="#c0504d" stroke-width="2"/>
<text x="645" y="275" font-family="Liberation Sans" font-size="12.5" fill="#000">1</text>
<rect x="616" y="286" width="32" height="23" fill="#fff" stroke="#c0504d" stroke-width="2"/>
<text x="622.5" y="301.8" font-family="Liberation Sans" font-size="12.5" fill="#000">2</text>
<rect x="634" y="313" width="32" height="23" fill="#fff" stroke="#c0504d" stroke-width="2"/>
<text x="640.5" y="329.6" font-family="Liberation Sans" font-size="12.5" fill="#000">3</text>
<rect x="612" y="335" width="32" height="23" fill="#fff" stroke="#c0504d" stroke-width="2"/>
<text x="617.5" y="351.8" font-family="Liberation Sans" font-size="12.5" fill="#000">4</text>
<rect x="625" y="363" width="32" height="22" fill="#fff" stroke="#c0504d" stroke-width="2"/>
<text x="630.5" y="379.6" font-family="Liberation Sans" font-size="12.5" fill="#000">5</text>
<text x="883" y="415.5" font-family="Liberation Serif" font-size="7.6" fill="#a8a294">obrazovaka.ru</text>
</g>
<g id="thumbboxes">
<rect x="639" y="258" width="32" height="24" fill="#fff" stroke="#b8423f" stroke-width="3.6"/>
<text x="645" y="275" font-family="Liberation Sans" font-size="12.5" fill="#3a50a0">1</text>
<rect x="616" y="286" width="32" height="23" fill="#fff" stroke="#b8423f" stroke-width="3.6"/>
<text x="622.5" y="301.8" font-family="Liberation Sans" font-size="12.5" fill="#3a50a0">2</text>
<rect x="634" y="313" width="32" height="23" fill="#fff" stroke="#b8423f" stroke-width="3.6"/>
<text x="640.5" y="329.6" font-family="Liberation Sans" font-size="12.5" fill="#3a50a0">3</text>
<rect x="612" y="335" width="32" height="23" fill="#fff" stroke="#b8423f" stroke-width="3.6"/>
<text x="617.5" y="351.8" font-family="Liberation Sans" font-size="12.5" fill="#3a50a0">4</text>
<rect x="625" y="363" width="32" height="22" fill="#fff" stroke="#b8423f" stroke-width="3.6"/>
<text x="630.5" y="379.6" font-family="Liberation Sans" font-size="12.5" fill="#3a50a0">5</text>
</g>
</defs>
<use href="#slidec"/>
<use href="#slidec" transform="translate(24,222.5) scale(0.31379) translate(-494,-204)"/>
<use href="#thumbboxes" transform="translate(24,222.5) scale(0.31379) translate(-494,-204)"/>
</svg><!-- STATUS BAR -->
<div class="a" style="left:0;top:698px;width:1366px;height:30px;background:linear-gradient(#c9dcf6 0,#dde9f9 15%,#cddff5 45%,#abc7ec 50%,#aac6eb 75%,#bcd4f2 100%);border-top:1px solid #6d94c8"></div>
<div class="a" style="left:91px;top:700px;width:2px;height:26px;background:linear-gradient(90deg,#9eb9dc,#f3f8fe)"></div>
<div class="a" style="left:188px;top:700px;width:2px;height:26px;background:linear-gradient(90deg,#9eb9dc,#f3f8fe)"></div>
<div class="a" style="left:375px;top:700px;width:2px;height:26px;background:linear-gradient(90deg,#9eb9dc,#f3f8fe)"></div>
<div class="a" style="left:1014px;top:700px;width:2px;height:26px;background:linear-gradient(90deg,#9eb9dc,#f3f8fe)"></div>
<div class="t" style="left:8px;top:708px;font-size:12.6px;color:#1a3a80">Слайд 1 из 1</div>
<div class="t" style="left:102px;top:708px;font-size:12.6px;color:#1a3a80">"Тема Office"</div>
<div class="t" style="left:237px;top:708px;font-size:12.6px;color:#1a3a80">Казахский (Казахстан)</div>
<svg class="a" style="left:192px;top:700px" width="36" height="28">
 <path d="M7 10.5 Q13 7 19 10 Q24 7.5 28 10.5 L28 16 Q22 18 15 22 Q9 18 6.5 13Z" fill="#fbfcfd" stroke="#6a6f78" stroke-width="1"/>
 <path d="M6.5 12.5 Q10 18 15 21.5 Q22 18.5 28 15.5" fill="none" stroke="#3460c8" stroke-width="1.6" stroke-dasharray="1.5 1"/>
 <path d="M13 21.5h4v1.5h-4z" fill="#2848a8"/>
 <path d="M15 8.5 L19 12.5 L28 2.5" fill="none" stroke="#3a68d0" stroke-width="2.4"/>
</svg>
<div class="a" style="left:1023px;top:700px;width:78px;height:26px;border:1px solid #9db9de;border-radius:2px;background:linear-gradient(#dfeafa,#c7dbf5 50%,#b6cff0 51%,#cfe0f6)"></div>
<div class="a" style="left:1024px;top:701px;width:28px;height:24px;background:linear-gradient(#edf4fc,#cfe0f5 50%,#bcd3f1 51%,#d8e6f8);border-right:1px solid #a8c2e4"></div>
<div class="a" style="left:1076px;top:701px;width:1px;height:24px;background:#a8c2e4"></div>
<svg class="a" style="left:0;top:698px" width="1366" height="30">
 <rect x="1029.5" y="6.5" width="15" height="14" fill="#fff" stroke="#333" stroke-width="1.2"/>
 <rect x="1031" y="8" width="4" height="11" fill="#444"/>
 <rect x="1037" y="8" width="6" height="5" fill="#666"/><rect x="1037" y="15" width="6" height="4" fill="#888"/>
 <rect x="1054.5" y="7.5" width="6" height="5" fill="#fff" stroke="#333" stroke-width="1.2"/><rect x="1063.5" y="7.5" width="6" height="5" fill="#fff" stroke="#333" stroke-width="1.2"/>
 <rect x="1054.5" y="15.5" width="6" height="5" fill="#fff" stroke="#333" stroke-width="1.2"/><rect x="1063.5" y="15.5" width="6" height="5" fill="#fff" stroke="#333" stroke-width="1.2"/>
 <rect x="1081" y="7" width="16" height="2" fill="#333"/>
 <rect x="1083.5" y="9.5" width="11" height="6" fill="#fff" stroke="#333" stroke-width="1.2"/>
 <path d="M1089 16v4M1085 21h8" stroke="#333" stroke-width="1.4"/>
 <defs><radialGradient id="zb" cx="50%" cy="30%" r="70%"><stop offset="0" stop-color="#ffffff"/><stop offset=".6" stop-color="#dfe8f3"/><stop offset="1" stop-color="#9fb4cf"/></radialGradient></defs>
 <path d="M1167 15.5h138" stroke="#f4f9ff" stroke-width="1"/><path d="M1167 16.5h138" stroke="#8fa8c8" stroke-width=".6"/>
 <path d="M1237.5 11v8" stroke="#eef5fd" stroke-width="1"/>
 <circle cx="1155.5" cy="14" r="11" fill="url(#zb)" stroke="#6d84a6"/>
 <rect x="1150" y="12.5" width="11" height="3.2" fill="#4a5a72"/>
 <circle cx="1317" cy="14" r="11" fill="url(#zb)" stroke="#6d84a6"/>
 <rect x="1311.5" y="12.5" width="11" height="3.2" fill="#4a5a72"/><rect x="1315.4" y="8.5" width="3.2" height="11" fill="#4a5a72"/>
 <path d="M1203.5 5.5h10v13l-5 5l-5-5z" fill="#eef3f9" stroke="#6d84a6"/>
 <path d="M1208.5 9v10" stroke="#9fb0c8" stroke-width="1.5"/>
 <rect x="1339.5" y="3.5" width="20" height="21" rx="1" fill="#e6eef8" stroke="#7f98bc" stroke-dasharray="1.5 1"/>
 <path d="M1342 13h15" stroke="#333" stroke-width="1"/><circle cx="1343.5" cy="13" r="1.6" fill="#333"/><circle cx="1355.5" cy="13" r="1.6" fill="#333"/>
 <path d="M1348.5 6v5M1346 8.5h5M1348.5 16v5M1346 18.5h5" stroke="#333" stroke-width="1"/>
</svg>
<div class="t" style="left:1110px;top:707px;font-size:13px;color:#1a3a80">60%</div>
<!-- TASKBAR -->
<div class="a" style="left:0;top:728px;width:1366px;height:40px;background:linear-gradient(90deg,#1f3036 0,#1f2f38 40%,#1d2c3d 75%,#1c2a3f 100%)"></div>
<div class="a" style="left:48px;top:728px;width:344px;height:40px;background:#f0f0f0;border-top:1px solid #d8d8d8"></div>
<div class="t" style="left:88px;top:741px;font-size:14.5px;color:#333">Введите здесь текст для поиска</div>
<div class="a" style="left:786px;top:728px;width:48px;height:40px;background:#3c4b55"></div>
<div class="a" style="left:692px;top:766px;width:40px;height:2px;background:#76b9ed"></div>
<div class="a" style="left:786px;top:766px;width:48px;height:2px;background:#76b9ed"></div>
<div class="a" style="left:839px;top:766px;width:40px;height:2px;background:#76b9ed"></div>
<div class="a" style="left:888px;top:766px;width:40px;height:2px;background:#76b9ed"></div>
<div class="a" style="left:1035px;top:766px;width:40px;height:2px;background:#76b9ed"></div>
<svg class="a" style="left:0;top:728px" width="1366" height="40">
 <!-- windows logo -->
 <path d="M15 13.5 L22.5 12.5 V19.5 H15Z M23.5 12.3 L32 11 V19.5 H23.5Z M15 20.5 H22.5 V27.5 L15 26.5Z M23.5 20.5 H32 V29 L23.5 27.7Z" fill="#fff"/>
 <!-- search icon -->
 <circle cx="70" cy="18" r="5.5" fill="none" stroke="#222" stroke-width="1.3"/>
 <path d="M66 22 L60 28" stroke="#222" stroke-width="1.5"/>
 <!-- task view -->
 <path d="M408 14.5h13M408 27.5h13M410 16.5v9h9v-9z" fill="none" stroke="#fff" stroke-width="1.3"/>
 <rect x="421.5" y="16" width="2.5" height="2.5" fill="#fff"/><path d="M422.7 20v9" stroke="#fff" stroke-width="1.2"/>
 <path d="M408 14.5v2M420 14.5v2M408 25.5v2M420 25.5v2" stroke="#fff"/>
 <!-- zoom -->
 <rect x="455.5" y="8.5" width="22.5" height="22.5" rx="6" fill="#4a8cf6"/>
 <rect x="460" y="15" width="9.5" height="9" rx="1.5" fill="#fff"/><path d="M470 18.5 L474 15.5 V24 L470 21Z" fill="#fff"/>
 <!-- chrome -->
 <circle cx="516" cy="20" r="11" fill="#db4437"/>
 <path d="M516 20 L506.5 25.5 A11 11 0 0 1 506.5 14.5 Z" fill="#0f9d58"/>
 <path d="M516 20 L506.5 25.5 A11 11 0 0 0 521.5 29.5 Z" fill="#0f9d58"/>
 <path d="M516 20 L527 20 A11 11 0 0 1 516 31 L521.5 29.5Z" fill="#ffcd40"/>
 <path d="M516 20 L526.5 16.6 A11 11 0 0 1 518 30.8 Z" fill="#ffcd40"/>
 <circle cx="516" cy="20" r="5" fill="#fff"/><circle cx="516" cy="20" r="4" fill="#4285f4"/>
 <!-- edge -->
 <defs><linearGradient id="edg" x1="0" y1="0" x2="1" y2=".4"><stop offset="0" stop-color="#22a6ee"/><stop offset=".5" stop-color="#2fc3cf"/><stop offset="1" stop-color="#6ee05a"/></linearGradient>
 <linearGradient id="edb" x1="0" y1="0" x2="0" y2="1"><stop offset="0" stop-color="#1f7fe0"/><stop offset="1" stop-color="#0e5bb8"/></linearGradient></defs>
 <circle cx="565" cy="20" r="12" fill="url(#edb)"/>
 <path d="M553.2 18 A12 12 0 0 1 577 20.5 Q577.5 25.5 571 25.5 Q566.5 25 566.5 21 Q566 15.5 559 15.5 Q555 16 553.2 18Z" fill="url(#edg)"/>
 <path d="M553 20 Q555 15 560 15.5 Q556 18 556.5 24 Q558 30 566 32 Q553 31 553 20Z" fill="#2a8ae6" opacity=".8"/>
 <circle cx="565.5" cy="21" r="3.2" fill="#1f2f38"/>
 <path d="M566.5 24 Q571 26.5 576.5 26 L576 27.5 Q570 29 565 25Z" fill="#1f2f38"/>
 <!-- telegram -->
 <circle cx="614" cy="20" r="11" fill="#2aa3df"/>
 <path d="M607 19.5 L620 14.5 L618 25 L613.5 22 L611 24.5 L611.5 21 L618 16 L610 20.8Z" fill="#fff"/>
 <!-- scanner -->
 <rect x="651" y="8" width="24" height="24" fill="#2b74e0"/>
 <path d="M657 24h13v2.5h-13z" fill="#fff"/><path d="M660 14 L669 21 H657.5" fill="none" stroke="#fff" stroke-width="1.5"/>
 <!-- explorer -->
 <path d="M701 12h8l2 2h11v15h-21z" fill="#f2c343"/>
 <rect x="701" y="16" width="21" height="12" fill="#ffd95c"/>
 <path d="M705.5 29v-5h12v5h-3v-2.5h-6v2.5z" fill="#2a7fd4"/>
 <!-- whatsapp -->
 <circle cx="761" cy="19.5" r="10.5" fill="#fff"/>
 <circle cx="761" cy="19.5" r="9" fill="#2ecc55"/>
 <path d="M751.5 30 L753.5 24 L757 27Z" fill="#fff"/>
 <path d="M757 14.5 Q756 19 760 23 Q763.5 25.5 766 24.5 L766 22.5 L763.5 21.5 L762.5 22.7 Q759.5 21 758.5 17.8 L759.7 16.7 L758.8 14.3Z" fill="#fff"/>
 <!-- powerpoint 2007 -->
 <path d="M798 11 L817 9 L822 30 L800 32 Z" fill="#f7d3c4"/>
 <path d="M797 14 L818 12 L821 29 L799 31 Z" fill="#e8541e"/>
 <rect x="803" y="18" width="5" height="1.6" fill="#fff"/><rect x="803" y="21" width="5" height="1.6" fill="#fff"/><rect x="803" y="24" width="5" height="1.6" fill="#fff"/>
 <circle cx="813" cy="21.5" r="3.6" fill="#fff"/><path d="M813 21.5 V17.9 A3.6 3.6 0 0 1 816.6 21.5Z" fill="#e8541e"/>
 <!-- avast secure browser -->
 <circle cx="859" cy="20" r="11" fill="#ff8a1d"/>
 <path d="M859 9 A11 11 0 0 1 870 20 L859 20Z" fill="#7b4fd0"/>
 <path d="M870 20 A11 11 0 0 1 859 31 Q864 26 859 20Z" fill="#f5c518"/>
 <path d="M853 17 L859 14 L865 17 Q865 25 859 28 Q853 25 853 17Z" fill="#fff"/>
 <circle cx="859" cy="19.5" r="1.6" fill="#333"/><path d="M859 20v3.5" stroke="#333" stroke-width="1.3"/>
 <!-- word 2007 -->
 <path d="M899 10 L917 8 L920 30 L899 31 Z" fill="#dfe8f5"/>
 <path d="M897 15 Q897 10 904 10 L903 30 Q897 28 897 22Z" fill="#3a6fc4"/>
 <text x="905" y="23" font-family="Liberation Sans" font-weight="bold" font-size="10" fill="#2a5bb0">W</text>
 <path d="M906 25h11M906 27.5h11" stroke="#3a6fc4" stroke-width="1.2"/>
 <!-- teams -->
 <circle cx="961.5" cy="12" r="3" fill="#7b83eb"/><circle cx="955" cy="11.5" r="3.6" fill="#5059c9"/>
 <path d="M958 16h9v7q0 5-4.5 5t-4.5-5z" fill="#7b83eb"/>
 <path d="M950 17h11v8q0 6-6 6t-6-6z" fill="#5059c9"/>
 <rect x="945" y="14" width="11" height="11" rx="1.5" fill="#4b53bc"/>
 <path d="M947.5 16.5h6M950.5 16.5v7" stroke="#fff" stroke-width="1.6"/>
 <!-- excel 2007 -->
 <path d="M996 11 L1014 9 L1017 30 L996 31 Z" fill="#e3f0dc" stroke="#5aa43e"/>
 <path d="M998 14 L1005 26M1005 14 L998 26" stroke="#2d8a2d" stroke-width="2.6"/>
 <path d="M1004 18h11M1004 22h11M1004 26h11M1009 15v14" stroke="#6ab04e" stroke-width="1.6"/>
 <!-- acrobat -->
 <rect x="1044" y="9" width="21" height="21" rx="3" fill="#c4120a"/>
 <path d="M1048 26 Q1052 21 1054.5 13 Q1055 11 1054 12 Q1053 15 1056 20 Q1059 23 1062 22.5 Q1059 21 1053 23 Q1050 24 1048 26Z" fill="none" stroke="#fff" stroke-width="1.2"/>
 <!-- tray -->
 <path d="M1145 24 L1151 18 L1157 24" fill="none" stroke="#fff" stroke-width="1.3"/>
 <path d="M1168 17h3l4-4v14l-4-4h-3z" fill="none" stroke="#fff" stroke-width="1.2"/>
 <circle cx="1179" cy="22.5" r="4.5" fill="#e81123"/>
 <path d="M1177 20.5l4 4M1181 20.5l-4 4" stroke="#fff" stroke-width="1.2"/>
 <path d="M1193 15v4M1196 15v4M1192 19h5v3h-5z M1194.5 22v4h3" fill="none" stroke="#fff" stroke-width="1.1"/>
 <rect x="1198.5" y="17.5" width="8" height="7" fill="none" stroke="#fff"/><rect x="1207" y="19" width="1.5" height="4" fill="#fff"/><rect x="1199.5" y="20" width="3" height="3.5" fill="#fff"/>
 <!-- notification -->
 <path d="M1325.5 12.5h16v11h-10l-3 3v-3h-3z" fill="#fff"/>
 <path d="M1328 15.5h11M1328 18h11M1328 20.5h8" stroke="#1c2a3f" stroke-width="1"/>
 <circle cx="1340" cy="26" r="7.5" fill="#3a3a3a" stroke="#1c2a3f" stroke-width="1"/>
 <text x="1340" y="30.5" font-family="Liberation Sans" font-size="12" fill="#fff" text-anchor="middle">9</text>
 <path d="M1361.5 0v40" stroke="#5f6b7a"/>
</svg>
<div class="t" style="left:1217px;top:741px;font-size:12.5px;color:#fff">ҚАЗ</div>
<div class="t" style="left:1267px;top:733px;font-size:12.2px;letter-spacing:-0.8px;color:#fff">19:22</div>
<div class="t" style="left:1253px;top:751px;font-size:12.2px;letter-spacing:-0.65px;color:#fff">03.12.2020</div>
<!-- office button -->
<svg class="a" style="left:0;top:0" width="60" height="60">
 <defs>
  <linearGradient id="obu" x1="0" y1="0" x2="0" y2="1"><stop offset="0" stop-color="#ffffff"/><stop offset="1" stop-color="#e3e8f0"/></linearGradient>
  <radialGradient id="obl" cx="50%" cy="90%" r="75%"><stop offset="0" stop-color="#ffffff"/><stop offset=".5" stop-color="#e2e9f3"/><stop offset="1" stop-color="#9fb2cf"/></radialGradient>
  <linearGradient id="lo" x1="0" y1="0" x2="1" y2="1"><stop offset="0" stop-color="#d83a18"/><stop offset="1" stop-color="#f7a224"/></linearGradient>
  <linearGradient id="lb" x1="0" y1="0" x2="1" y2="1"><stop offset="0" stop-color="#58d0f8"/><stop offset="1" stop-color="#1868c8"/></linearGradient>
  <linearGradient id="ly" x1="0" y1="0" x2="1" y2="1"><stop offset="0" stop-color="#fde040"/><stop offset="1" stop-color="#f0a800"/></linearGradient>
  <linearGradient id="lg" x1="0" y1="0" x2="1" y2="1"><stop offset="0" stop-color="#8ad050"/><stop offset="1" stop-color="#2a8a30"/></linearGradient>
  <clipPath id="obc"><circle cx="30.7" cy="30.5" r="21"/></clipPath>
 </defs>
 <circle cx="30.7" cy="30.5" r="22.3" fill="#fafbfd" stroke="#a9b4c4" stroke-width="1"/>
 <g clip-path="url(#obc)">
  <rect x="8" y="8" width="46" height="22.5" fill="url(#obu)"/>
  <rect x="8" y="30.5" width="46" height="23" fill="url(#obl)"/>
 </g>
 <circle cx="30.7" cy="30.5" r="21" fill="none" stroke="#ffffff" stroke-width="1.2" opacity=".9"/>
 <rect x="18.8" y="18.1" width="11.2" height="11.2" rx="1.8" fill="none" stroke="url(#lo)" stroke-width="3.6"/>
 <rect x="34.1" y="22.9" width="6.9" height="6.9" rx="1.2" fill="none" stroke="url(#lb)" stroke-width="2.6"/>
 <rect x="20.9" y="34.3" width="9.1" height="9.4" rx="1.5" fill="none" stroke="url(#ly)" stroke-width="3.6"/>
 <rect x="34.5" y="34.2" width="8.2" height="7.8" rx="1.5" fill="none" stroke="url(#lg)" stroke-width="3.4"/>
 
 <circle cx="26.5" cy="29.5" r="1.3" fill="#f07028"/><circle cx="34" cy="29.5" r="1.3" fill="#1a6ad0"/>
 <circle cx="27" cy="34" r="1.3" fill="#f8c020"/><circle cx="34.5" cy="34" r="1.3" fill="#40b040"/>
</svg>
</body></html>
